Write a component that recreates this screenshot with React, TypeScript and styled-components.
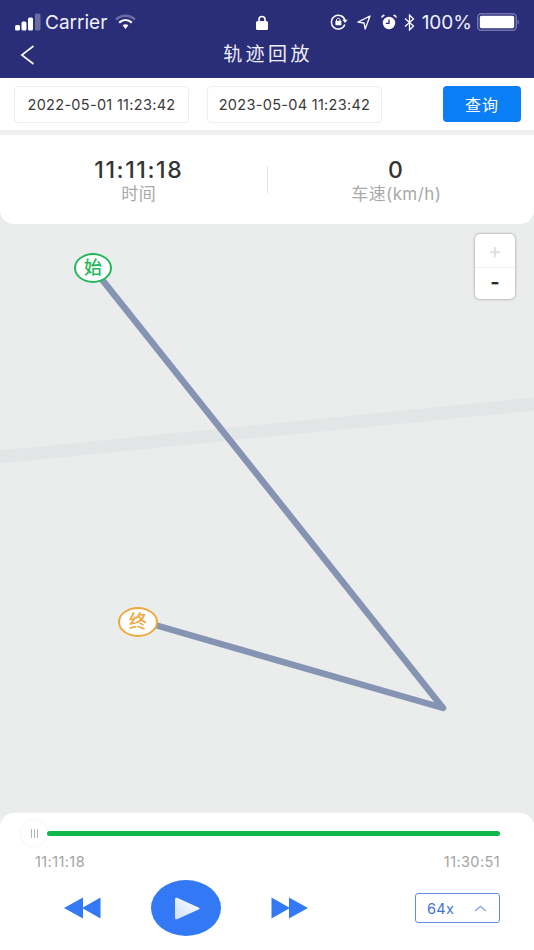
import styled, { createGlobalStyle } from 'styled-components';

const GlobalStyle = createGlobalStyle`
  html, body {
    margin: 0;
    padding: 0;
    background: #ebecec;
  }
  * {
    box-sizing: border-box;
  }
`;

const FONT = `Inter, "Noto Sans CJK SC", sans-serif`;

const Page = styled.div`
  width: 534px;
  height: 950px;
  display: flex;
  flex-direction: column;
  overflow: hidden;
  background: #ebecec;
  font-family: ${FONT};
`;

const Header = styled.header`
  height: 78px;
  background: #2a2d78;
  color: #fff;
  flex: none;
`;

const StatusBar = styled.div`
  height: 40px;
  padding: 4px 15px 0;
  display: grid;
  grid-template-columns: 241px 12px 1fr;
  align-items: center;
`;

const StatusLeft = styled.div`
  display: flex;
  align-items: center;
`;

const StatusRight = styled.div`
  display: flex;
  align-items: center;
  justify-content: flex-end;
`;

const CarrierName = styled.span`
  font-size: 19px;
  margin: 0 8px 0 4px;
  color: #f1f1f8;
`;

const Percent = styled.span`
  font-size: 19px;
  margin: 0 5px 0 7px;
  color: #f1f1f8;
`;

const StatusIcon = styled.svg<{ $gap?: number }>`
  display: block;
  flex: none;
  margin-left: ${p => p.$gap ?? 0}px;
`;

const NavBar = styled.div`
  height: 38px;
  padding: 0 0 8px 20px;
  position: relative;
  display: flex;
  align-items: center;
`;

const NavTitle = styled.div`
  position: absolute;
  left: 2px;
  right: 0;
  top: 0;
  height: 30px;
  line-height: 30px;
  text-align: center;
  font-size: 19px;
  letter-spacing: 3.4px;
  color: #f0f0f8;
`;

const FilterBar = styled.div`
  flex: none;
  height: 57px;
  padding: 8px 13px 0 14px;
  background: #fff;
  border-bottom: 5px solid #eeeeee;
  display: flex;
  align-items: flex-start;
`;

const DateBox = styled.div`
  width: 175px;
  height: 37px;
  margin-right: 18px;
  border: 1px solid #eeeeee;
  border-radius: 4px;
  display: flex;
  align-items: center;
  justify-content: center;
  font-size: 14.5px;
  letter-spacing: 0.3px;
  color: #3a3a3a;
  white-space: nowrap;
`;

const QueryButton = styled.button`
  width: 78px;
  height: 36px;
  margin-left: auto;
  border: 0;
  border-radius: 4px;
  background: #0a7ef5;
  color: #fff;
  font-family: inherit;
  font-size: 16px;
  letter-spacing: 1px;
`;

const StatsCard = styled.section`
  flex: none;
  height: 89px;
  padding-top: 21px;
  background: #fff;
  border-radius: 0 0 14px 14px;
  display: grid;
  grid-template-columns: 1fr 1px 1fr;
  position: relative;
  z-index: 1;
`;

const Stat = styled.div<{ $insetLeft?: number; $insetRight?: number }>`
  display: flex;
  flex-direction: column;
  align-items: center;
  padding-left: ${p => p.$insetLeft ?? 0}px;
  padding-right: ${p => p.$insetRight ?? 0}px;
`;

const StatValue = styled.div`
  font-size: 23px;
  line-height: 28px;
  font-weight: 500;
  letter-spacing: 1.6px;
  color: #333;
`;

const StatLabel = styled.div`
  font-size: 17px;
  line-height: 20px;
  letter-spacing: 0.4px;
  color: #a9a9a9;
`;

const StatDivider = styled.div`
  width: 1px;
  height: 27px;
  margin-top: 10px;
  background: #e2e2e2;
`;

const MapArea = styled.main`
  flex: 1;
  position: relative;
  overflow: hidden;
`;

const MapCanvas = styled.svg`
  position: absolute;
  left: 0;
  top: 0;
  display: block;
`;

const Marker = styled.div<{ $color: string; $x: number; $y: number; $w: number }>`
  position: absolute;
  left: ${p => p.$x}px;
  top: ${p => p.$y}px;
  width: ${p => p.$w}px;
  height: 30px;
  border: 2px solid ${p => p.$color};
  border-radius: 50%;
  background: #fff;
  color: ${p => p.$color};
  font-size: 18px;
  font-weight: 500;
  line-height: 26px;
  text-align: center;
`;

const ZoomControl = styled.div`
  position: absolute;
  left: 475px;
  top: 10px;
  width: 40px;
  height: 65px;
  background: #fff;
  border-radius: 5px;
  box-shadow: 0 0 3px rgba(0, 0, 0, 0.4);
  display: grid;
  grid-template-rows: 33px 32px;
`;

const ZoomButton = styled.div<{ $muted?: boolean }>`
  display: flex;
  align-items: center;
  justify-content: center;
  padding-bottom: ${p => (p.$muted ? 0 : 3)}px;
  font-size: ${p => (p.$muted ? 21 : 20)}px;
  font-weight: ${p => (p.$muted ? 400 : 700)};
  line-height: 26px;
  color: ${p => (p.$muted ? '#dcdcdc' : '#2a2a2a')};
  & + & {
    border-top: 1px solid #eeeeee;
  }
`;

const PlayerPanel = styled.footer`
  flex: none;
  height: 137px;
  padding: 0 34px;
  background: #fff;
  border-radius: 14px 14px 0 0;
`;

const SliderRow = styled.div`
  height: 40px;
  position: relative;
  display: flex;
  align-items: center;
  padding-left: 13px;
`;

const SliderTrack = styled.div`
  flex: 1;
  height: 5px;
  border-radius: 3px;
  background: #12b84a;
`;

const SliderThumb = styled.div`
  position: absolute;
  left: -13px;
  top: 7px;
  width: 26px;
  height: 26px;
  border-radius: 50%;
  background: #fff;
  box-shadow: 0 0 3px rgba(0, 0, 0, 0.08);
  display: flex;
  align-items: center;
  justify-content: center;
  gap: 2px;
`;

const ThumbLine = styled.span`
  width: 1px;
  height: 9px;
  background: #b5b5b5;
`;

const TimeRow = styled.div`
  display: flex;
  justify-content: space-between;
  padding-left: 1px;
  font-size: 14.5px;
  letter-spacing: 0.4px;
  line-height: 18px;
  color: #a3a3a3;
`;

const Controls = styled.div`
  height: 56px;
  margin-top: 9px;
  display: flex;
  align-items: center;
`;

const SkipButton = styled.svg<{ $left: number }>`
  display: block;
  flex: none;
  margin-left: ${p => p.$left}px;
`;

const PlayButton = styled.div`
  width: 70px;
  height: 56px;
  margin-left: 50px;
  flex: none;
  border-radius: 50%;
  background: #3379f6;
  display: flex;
  align-items: center;
  justify-content: center;
`;

const SpeedBox = styled.div`
  width: 85px;
  height: 30px;
  margin-left: auto;
  padding: 0 12px 0 11px;
  border: 1.5px solid #5f8fdf;
  border-radius: 3px;
  display: flex;
  align-items: center;
  justify-content: space-between;
  font-size: 14.5px;
  letter-spacing: 0.3px;
  color: #3f74cf;
`;

const SignalIcon = () => (
  <StatusIcon width="26" height="18" viewBox="0 0 26 18">
    <rect x="0" y="12" width="5" height="5.5" rx="1.5" fill="#fff" />
    <rect x="6.5" y="8.5" width="5" height="9" rx="1.5" fill="#fff" />
    <rect x="13" y="4.5" width="5" height="13" rx="1.5" fill="#fff" />
    <rect x="20" y="0.5" width="5.5" height="17" rx="1.5" fill="#6a6da3" />
  </StatusIcon>
);

const WifiIcon = () => (
  <StatusIcon width="21" height="16" viewBox="0 0 21 16">
    <path d="M1 5.5C6.5 0.5 14.5 0.5 20 5.5" fill="none" stroke="#6a6da3" strokeWidth="2.4" />
    <path d="M4.2 8.6C8 5.4 13 5.4 16.8 8.6" fill="none" stroke="#fff" strokeWidth="2.2" />
    <path d="M7.6 11.2C9.4 9.9 11.6 9.9 13.4 11.2L10.5 15Z" fill="#fff" />
  </StatusIcon>
);

const LockIcon = () => (
  <StatusIcon width="12" height="15" viewBox="0 0 12 15">
    <path d="M3 7V4.4C3 0.6 9 0.6 9 4.4V7" fill="none" stroke="#fff" strokeWidth="1.6" />
    <rect x="0" y="6" width="12" height="9" rx="1.5" fill="#fff" />
  </StatusIcon>
);

const RotationLockIcon = () => (
  <StatusIcon width="18" height="16" viewBox="0 0 18 16">
    <path d="M14.8 10.5A6.9 6.9 0 1 1 15 6.5" fill="none" stroke="#fff" strokeWidth="1.5" />
    <path d="M12.4 5.8H17.6L15 9Z" fill="#fff" />
    <path d="M6.5 7V5.8C6.5 3.8 10 3.8 10 5.8V7" fill="none" stroke="#fff" strokeWidth="1" />
    <rect x="5.4" y="6.8" width="6" height="4.4" rx="0.7" fill="#fff" />
  </StatusIcon>
);

const LocationIcon = () => (
  <StatusIcon $gap={9} width="14" height="15" viewBox="0 0 14 15">
    <path d="M13 1L1 7.2L7 8L8.2 14Z" fill="none" stroke="#fff" strokeWidth="1.3" strokeLinejoin="round" />
  </StatusIcon>
);

const AlarmIcon = () => (
  <StatusIcon $gap={10} width="16" height="16" viewBox="0 0 16 16">
    <circle cx="8" cy="9" r="6.2" fill="#fff" />
    <path d="M8 5.5V9.3H4.8" fill="none" stroke="#2a2d78" strokeWidth="1.3" />
    <path d="M0.6 4.2L4 1.2L2.2 0.6L0.4 2.2Z M15.4 4.2L12 1.2L13.8 0.6L15.6 2.2Z" fill="#fff" />
  </StatusIcon>
);

const BluetoothIcon = () => (
  <StatusIcon $gap={7} width="11" height="17" viewBox="0 0 11 17">
    <path d="M1 4.5L9.5 12L5.5 16V1L9.5 5L1 12.5" fill="none" stroke="#fff" strokeWidth="1.3" />
  </StatusIcon>
);

const BatteryIcon = () => (
  <StatusIcon width="42" height="18" viewBox="0 0 42 18">
    <rect x="0.75" y="0.75" width="38.5" height="16.5" rx="3.5" fill="none" stroke="#7275ab" strokeWidth="1.5" />
    <rect x="2.8" y="2.8" width="34.4" height="12.4" rx="1.6" fill="#fff" />
    <path d="M40.6 6.4C41.6 6.8 42 7.8 42 9C42 10.2 41.6 11.2 40.6 11.6Z" fill="#7275ab" />
  </StatusIcon>
);

const BackIcon = () => (
  <svg width="15" height="20" viewBox="0 0 15 20" style={{ display: 'block' }}>
    <path d="M13.5 1L1.8 10L13.5 19" fill="none" stroke="#fff" strokeWidth="1.6" />
  </svg>
);

const RewindIcon = () => (
  <SkipButton $left={30} width="37" height="22" viewBox="0 0 37 22">
    <path d="M0 11L19 0.5V21.5Z M18 11L36.5 0.5V21.5Z" fill="#3379f6" strokeLinejoin="round" />
  </SkipButton>
);

const ForwardIcon = () => (
  <SkipButton $left={50} width="37" height="22" viewBox="0 0 37 22">
    <path d="M37 11L18 0.5V21.5Z M19 11L0.5 0.5V21.5Z" fill="#3379f6" strokeLinejoin="round" />
  </SkipButton>
);

const PlayIcon = () => (
  <svg width="26" height="23" viewBox="0 0 26 23" style={{ display: 'block', marginLeft: 2, marginTop: 1 }}>
    <defs>
      <linearGradient id="playFill" x1="1" y1="0" x2="0" y2="1">
        <stop offset="0" stopColor="#ffffff" />
        <stop offset="1" stopColor="#cfdffb" />
      </linearGradient>
    </defs>
    <path d="M1 2.2C1 0.8 2.4 0.3 3.6 0.9L24.6 10.4C25.8 11 25.8 12 24.6 12.6L3.6 22.1C2.4 22.7 1 22.2 1 20.8Z" fill="url(#playFill)" />
  </svg>
);

const App = () => {
  return (
    <Page>
      <GlobalStyle />
      <Header>
        <StatusBar>
          <StatusLeft>
            <SignalIcon />
            <CarrierName>Carrier</CarrierName>
            <WifiIcon />
          </StatusLeft>
          <LockIcon />
          <StatusRight>
            <RotationLockIcon />
            <LocationIcon />
            <AlarmIcon />
            <BluetoothIcon />
            <Percent>100%</Percent>
            <BatteryIcon />
          </StatusRight>
        </StatusBar>
        <NavBar>
          <BackIcon />
          <NavTitle>轨迹回放</NavTitle>
        </NavBar>
      </Header>

      <FilterBar>
        <DateBox>2022-05-01 11:23:42</DateBox>
        <DateBox>2023-05-04 11:23:42</DateBox>
        <QueryButton>查询</QueryButton>
      </FilterBar>

      <StatsCard>
        <Stat $insetLeft={11}>
          <StatValue>11:11:18</StatValue>
          <StatLabel>时间</StatLabel>
        </Stat>
        <StatDivider />
        <Stat $insetRight={9}>
          <StatValue>0</StatValue>
          <StatLabel>车速(km/h)</StatLabel>
        </Stat>
      </StatsCard>

      <MapArea>
        <MapCanvas width="534" height="590" viewBox="0 0 534 590">
          <path d="M0 233L534 180" fill="none" stroke="#e2e6e6" strokeWidth="13" />
          <path d="M100 53L443 484L155 401" fill="none" stroke="#8694b4" strokeWidth="6.5" strokeLinejoin="round" />
        </MapCanvas>
        <Marker $color="#22b95a" $x={74} $y={29} $w={38}>始</Marker>
        <Marker $color="#eea83c" $x={118} $y={383} $w={40}>终</Marker>
        <ZoomControl>
          <ZoomButton $muted>+</ZoomButton>
          <ZoomButton>-</ZoomButton>
        </ZoomControl>
      </MapArea>

      <PlayerPanel>
        <SliderRow>
          <SliderThumb>
            <ThumbLine />
            <ThumbLine />
            <ThumbLine />
          </SliderThumb>
          <SliderTrack />
        </SliderRow>
        <TimeRow>
          <span>11:11:18</span>
          <span>11:30:51</span>
        </TimeRow>
        <Controls>
          <RewindIcon />
          <PlayButton>
            <PlayIcon />
          </PlayButton>
          <ForwardIcon />
          <SpeedBox>
            <span>64x</span>
            <svg width="13" height="7" viewBox="0 0 13 7">
              <path d="M1 6L6.5 1.5L12 6" fill="none" stroke="#8aabe6" strokeWidth="1.4" />
            </svg>
          </SpeedBox>
        </Controls>
      </PlayerPanel>
    </Page>
  );
};

export default App;
